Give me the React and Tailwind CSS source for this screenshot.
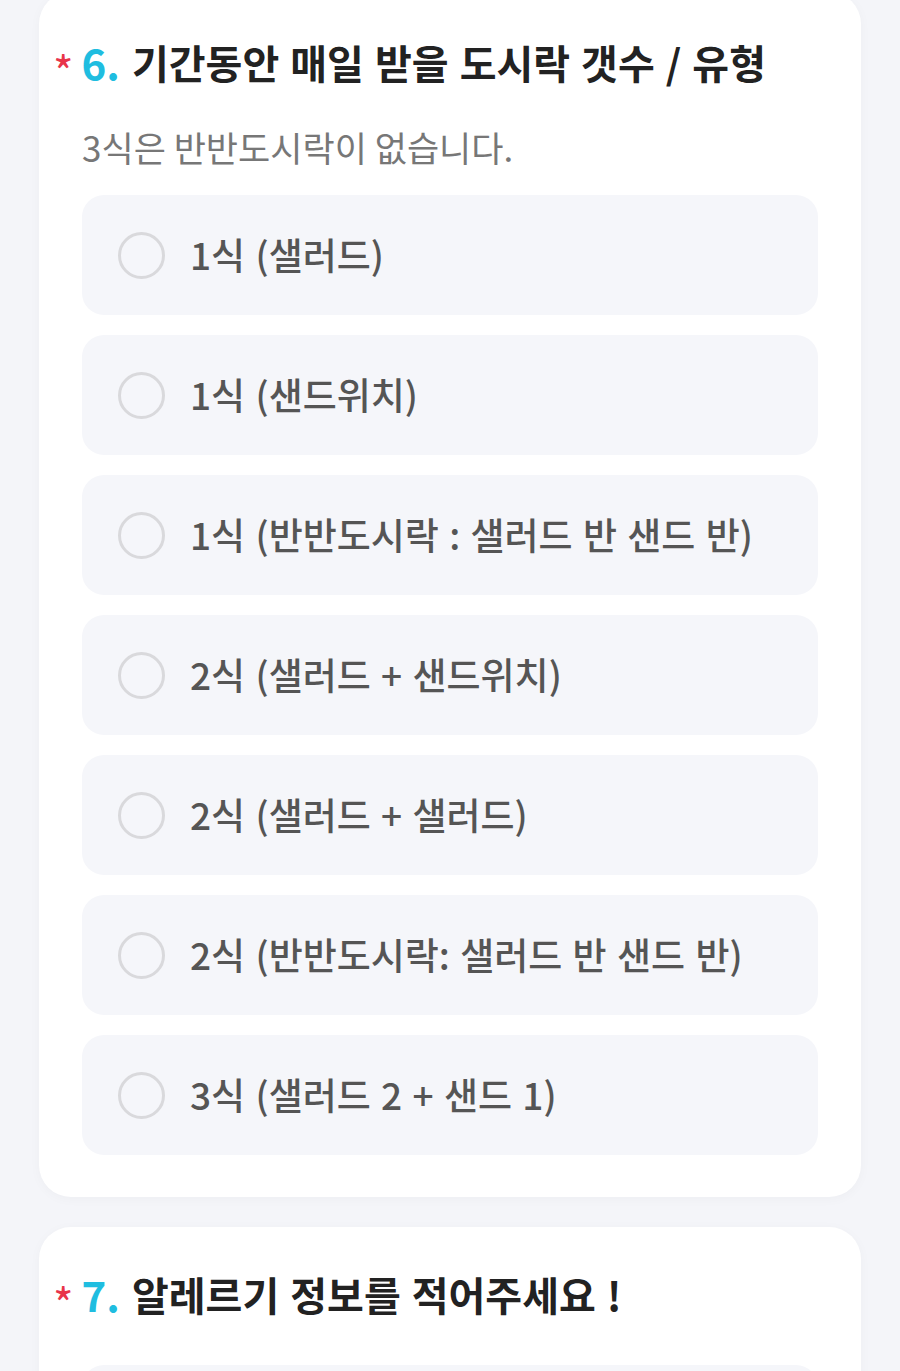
const options = [
  '1식 (샐러드)',
  '1식 (샌드위치)',
  '1식 (반반도시락 : 샐러드 반 샌드 반)',
  '2식 (샐러드 + 샌드위치)',
  '2식 (샐러드 + 샐러드)',
  '2식 (반반도시락: 샐러드 반 샌드 반)',
  '3식 (샐러드 2 + 샌드 1)',
];

const font = { fontFamily: '"Noto Sans CJK KR", "Noto Sans", sans-serif' };

function Heading({ num, children }) {
  return (
    <h2 className="-ml-[29px] flex h-[54px] items-center text-[40px] font-bold leading-[54px] text-[#222]">
      <span className="mr-[8px] translate-y-[8px] text-[44px] font-normal text-[#e8344a]">*</span>
      <span className="mr-[12px] text-[42px] text-[#1fbde0]">{num}.</span>
      <span className="[word-spacing:2px]">{children}</span>
    </h2>
  );
}

function Option({ label }) {
  return (
    <label className="flex h-[120px] items-center rounded-[22px] bg-[#f5f6fa] pl-[36px]">
      <span className="h-[47px] w-[47px] shrink-0 rounded-full border-[3px] border-[#d9d9dc]" />
      <span className="ml-[25px] text-[37px] font-medium text-[#555] [word-spacing:2px]">{label}</span>
    </label>
  );
}

export default function App() {
  return (
    <div style={font} className="min-h-[1371px] overflow-hidden bg-[#f4f5f9] px-[39px]">
      <section className="-mt-[8px] rounded-[32px] bg-white px-[43px] pb-[42px] pt-[43px] shadow-[0_2px_12px_rgba(0,0,0,0.03)]">
        <Heading num="6">기간동안 매일 받을 도시락 갯수 / 유형</Heading>
        <p className="mt-[34px] text-[35px] leading-[48px] text-[#777]">
          3식은 반반도시락이 없습니다.
        </p>
        <div className="mt-[24px] flex flex-col gap-[20px]">
          {options.map((o) => (
            <Option key={o} label={o} />
          ))}
        </div>
      </section>
      <section className="mt-[30px] rounded-[32px] bg-white px-[43px] pb-[43px] pt-[40px] shadow-[0_2px_12px_rgba(0,0,0,0.03)]">
        <Heading num="7">알레르기 정보를 적어주세요 !</Heading>
        <div className="mt-[44px] h-[120px] rounded-[22px] bg-[#f5f6fa]" />
      </section>
    </div>
  );
}
